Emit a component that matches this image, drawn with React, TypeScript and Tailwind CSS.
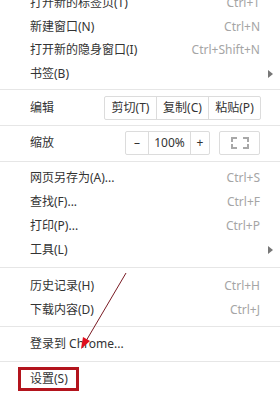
import React from 'react';

type Item = { label: string; shortcut?: string; sub?: boolean };

const font = { fontFamily: '"Noto Sans", "Noto Sans CJK SC", sans-serif' };

function Row({ label, shortcut, sub }: Item) {
    return (
        <div className="flex items-center h-[23.5px] pl-[30px] pr-[4px]">
            <span className="flex-1 text-[#333]">{label}</span>
            {shortcut && <span className="text-[#a5a5a5]">{shortcut}</span>}
            <span className="w-[16px] flex justify-end">
                {sub && (
                    <span className="w-0 h-0 border-y-[4px] border-y-transparent border-l-[5px] border-l-[#777] mr-[3px]" />
                )}
            </span>
        </div>
    );
}

function Row24({ label, shortcut, sub }: Item) {
    return (
        <div className="flex items-center h-6 pl-[30px] pr-[4px]">
            <span className="flex-1 text-[#333]">{label}</span>
            {shortcut && <span className="text-[#a5a5a5]">{shortcut}</span>}
            <span className="w-[16px] flex justify-end">
                {sub && (
                    <span className="w-0 h-0 border-y-[4px] border-y-transparent border-l-[5px] border-l-[#777] mr-[3px]" />
                )}
            </span>
        </div>
    );
}

const Sep = () => <div className="h-px bg-[#e6e6e6]" />;

export default function App() {
    return (
        <div className="relative w-[280px] h-[393px] overflow-hidden bg-white text-[12px] leading-none" style={font}>
            <div className="mt-[-8.75px]">
                <Row label="打开新的标签页(T)" shortcut="Ctrl+T" />
                <Row label="新建窗口(N)" shortcut="Ctrl+N" />
                <Row label="打开新的隐身窗口(I)" shortcut="Ctrl+Shift+N" />
                <Row label="书签(B)" sub />
            </div>

            <div className="pt-[3.75px]"><Sep /></div>

            {/* Edit */}
            <div className="flex items-center pt-[6px] pb-[5px] pl-[30px] pr-[19px]">
                <span className="flex-1 text-[#333]">编辑</span>
                <div className="flex h-6 border border-[#dcdcdc] rounded-[2px] text-[#333]">
                    <span className="w-[51px] flex items-center justify-center">剪切(T)</span>
                    <span className="w-[52px] flex items-center justify-center border-l border-[#dcdcdc]">复制(C)</span>
                    <span className="w-[52px] flex items-center justify-center border-l border-[#dcdcdc]">粘贴(P)</span>
                </div>
            </div>
            <Sep />

            {/* Zoom */}
            <div className="flex items-center pt-[5px] pb-[6px] pl-[30px] pr-[20px]">
                <span className="flex-1 text-[#333]">缩放</span>
                <div className="flex h-6 border border-[#dcdcdc] rounded-[2px] text-[#333]">
                    <span className="w-[22px] flex items-center justify-center">–</span>
                    <span className="w-[43px] flex items-center justify-center border-x border-[#dcdcdc]">100%</span>
                    <span className="w-[18px] flex items-center justify-center">+</span>
                </div>
                <div className="ml-[9px] w-[41px] h-6 flex items-center justify-center border border-[#dcdcdc] rounded-[2px]">
                    <svg width="18" height="12" viewBox="0 0 18 12" fill="none" stroke="#a8a8a8" strokeWidth="2">
                        <path d="M1 5V1h5M12 1h5v4M17 7v4h-5M6 11H1V7" />
                    </svg>
                </div>
            </div>
            <Sep />

            <div className="pt-[4px] pb-[5px]">
                <Row24 label="网页另存为(A)..." shortcut="Ctrl+S" />
                <Row24 label="查找(F)..." shortcut="Ctrl+F" />
                <Row24 label="打印(P)..." shortcut="Ctrl+P" />
                <Row24 label="工具(L)" sub />
            </div>
            <Sep />

            <div className="pt-[6px] pb-[4px]">
                <Row24 label="历史记录(H)" shortcut="Ctrl+H" />
                <Row24 label="下载内容(D)" shortcut="Ctrl+J" />
            </div>
            <Sep />

            <div className="pt-[5px] pb-[5px]">
                <Row24 label="登录到 Chrome..." />
            </div>
            <Sep />

            <div className="pt-[5px] pl-[18px]">
                <div className="w-[61px] h-[24px] border-[3px] border-[#b3141d] flex items-center pl-[9px] text-[#333]">
                    设置(S)
                </div>
            </div>

            {/* annotation arrow */}
            <svg className="absolute inset-0 pointer-events-none" width="280" height="393" viewBox="0 0 280 393">
                <line x1="126" y1="273" x2="86" y2="341" stroke="#7a1b24" strokeWidth="1" />
                <polygon points="81,349 83,337 90,341" fill="#e0101e" />
            </svg>
        </div>
    );
}
